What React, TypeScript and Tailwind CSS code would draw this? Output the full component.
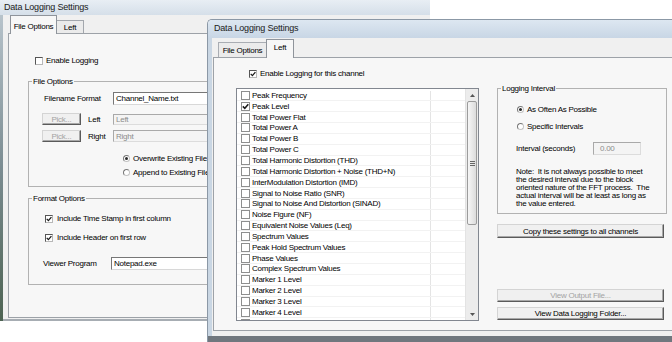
import type { ReactNode } from "react";

const channels = [
  "Peak Frequency",
  "Peak Level",
  "Total Power Flat",
  "Total Power A",
  "Total Power B",
  "Total Power C",
  "Total Harmonic Distortion (THD)",
  "Total Harmonic Distortion + Noise (THD+N)",
  "InterModulation Distortion (IMD)",
  "Signal to Noise Ratio (SNR)",
  "Signal to Noise And Distortion (SINAD)",
  "Noise Figure (NF)",
  "Equivalent Noise Values (Leq)",
  "Spectrum Values",
  "Peak Hold Spectrum Values",
  "Phase Values",
  "Complex Spectrum Values",
  "Marker 1 Level",
  "Marker 2 Level",
  "Marker 3 Level",
  "Marker 4 Level",
  "Marker 5 Level",
];

const note = [
  "Note:  It is not always possible to meet",
  "the desired interval due to the block",
  "oriented nature of the FFT process.  The",
  "actual interval will be at least as long as",
  "the value entered.",
];

function Tick({ size = 6 }: { size?: number }) {
  return (
    <svg width={size} height={size} viewBox="0 0 6 6" className="block">
      <path d="M0.7 2.9 2.4 4.6 5.4 1.1" fill="none" stroke="#1a1a1a" strokeWidth="1.3" />
    </svg>
  );
}

// classic sunken checkbox
function CheckBox({ checked = false }: { checked?: boolean }) {
  return (
    <span className="flex h-[8px] w-[8px] shrink-0 items-center justify-center border border-[#555] border-r-[#b8b8b8] border-b-[#b8b8b8] bg-white">
      {checked && <Tick />}
    </span>
  );
}

function ListBox({ checked = false }: { checked?: boolean }) {
  return (
    <span className="flex h-[9px] w-[9px] shrink-0 items-center justify-center border border-[#8e8f8f] bg-white">
      {checked && <Tick size={7} />}
    </span>
  );
}

function Radio({ on = false }: { on?: boolean }) {
  return (
    <span className="flex h-[7px] w-[7px] shrink-0 items-center justify-center rounded-full border border-[#777] border-r-[#c4c4c4] border-b-[#c4c4c4] bg-white">
      {on && <span className="h-[3px] w-[3px] rounded-full bg-[#2a2a2a]" />}
    </span>
  );
}

function Btn({ children, disabled = false, className = "" }: { children: ReactNode; disabled?: boolean; className?: string }) {
  return (
    <div
      className={`flex shrink-0 items-center justify-center border border-[#d4d4d4] border-r-[#5a5a5a] border-b-[#5a5a5a] bg-[#f0f0f0] shadow-[inset_-1px_-1px_0_#a8a8a8] ${
        disabled ? "text-[#a3a3a3]" : "text-black"
      } ${className}`}
    >
      {children}
    </div>
  );
}

function Field({ children, disabled = false, className = "" }: { children: ReactNode; disabled?: boolean; className?: string }) {
  return (
    <div
      className={`flex items-center border pl-[2px] ${
        disabled
          ? "border-[#a9a9a9] border-r-[#dcdcdc] border-b-[#dcdcdc] bg-[#f4f4f4] text-[#8c8c8c]"
          : "border-[#777] border-r-[#d8d8d8] border-b-[#d8d8d8] bg-white"
      } ${className}`}
    >
      {children}
    </div>
  );
}

function Group({ title, className = "", children }: { title: string; className?: string; children: ReactNode }) {
  return (
    <fieldset className={`border border-[#b2b2b2] ${className}`}>
      <legend className="ml-[3px] px-[1px] leading-[11px]">{title}</legend>
      {children}
    </fieldset>
  );
}

function BackWindow() {
  return (
    <div className="absolute left-0 top-0 flex h-[321px] w-[430px] flex-col">
      <div className="h-[15px] shrink-0 bg-linear-to-b from-[#e8eef4] to-[#d5dfe9] pl-[4px] text-[9px] leading-[15px] tracking-[-0.2px] text-[#1b1b1b]">
        Data Logging Settings
      </div>
      <div className="flex min-h-0 flex-1">
        <div className="w-[3px] shrink-0 bg-linear-to-b from-[#b7c3cb] via-[#7b8c92] to-[#4d6352]" />
        <div className="flex flex-1 flex-col border-b-2 border-[#a7adb3] bg-[#f0f0f0] pb-[1px] pl-[5px]">
          <div className="flex h-[18px] shrink-0 items-end pl-[2px]">
            <div className="relative z-10 -mb-px flex h-[19px] w-[47px] items-center justify-center border border-b-0 border-[#8f949b] bg-[#f7f7f7] pt-[2px]">
              File Options
            </div>
            <div className="flex h-[13px] w-[27px] items-center justify-center border border-b-0 border-l-0 border-[#a3a7ad] bg-[#ebebeb]">
              Left
            </div>
          </div>
          <div className="flex min-h-0 flex-1 flex-col border border-[#9da2a8] bg-[#f7f7f7]">
            <div className="ml-[26px] mt-[21px] flex h-[11px] items-center gap-[3px]">
              <CheckBox />
              <span>Enable Logging</span>
            </div>

            <Group title="File Options" className="ml-[19px] mt-[10px] h-[111px] w-[390px] shrink-0">
              <div className="mt-[5px] flex h-[13px] items-center pl-[15px] pr-[8px]">
                <span className="w-[69px] shrink-0">Filename Format</span>
                <Field className="h-[13px] flex-1">Channel_Name.txt</Field>
              </div>
              <div className="mt-[8px] flex h-[12px] items-center pl-[13px] pr-[8px]">
                <Btn disabled className="h-[12px] w-[39px]">Pick...</Btn>
                <span className="ml-[7px] w-[25px] shrink-0">Left</span>
                <Field disabled className="h-[11px] flex-1">Left</Field>
              </div>
              <div className="mt-[5px] flex h-[12px] items-center pl-[13px] pr-[8px]">
                <Btn disabled className="h-[12px] w-[39px]">Pick...</Btn>
                <span className="ml-[7px] w-[25px] shrink-0">Right</span>
                <Field disabled className="h-[12px] flex-1">Right</Field>
              </div>
              <div className="mt-[11px] flex h-[11px] items-center gap-[3px] pl-[94px]">
                <Radio on />
                <span>Overwrite Existing File</span>
              </div>
              <div className="mt-[3px] flex h-[11px] items-center gap-[3px] pl-[94px]">
                <Radio />
                <span>Append to Existing File</span>
              </div>
            </Group>

            <Group title="Format Options" className="ml-[19px] mt-[6px] h-[92px] w-[390px] shrink-0">
              <div className="mt-[9px] flex h-[11px] items-center gap-[4px] pl-[16px]">
                <CheckBox checked />
                <span>Include Time Stamp in first column</span>
              </div>
              <div className="mt-[8px] flex h-[11px] items-center gap-[4px] pl-[16px]">
                <CheckBox checked />
                <span>Include Header on first row</span>
              </div>
              <div className="mt-[14px] flex h-[13px] items-center pl-[14px] pr-[8px]">
                <span className="w-[68px] shrink-0">Viewer Program</span>
                <Field className="h-[13px] flex-1">Notepad.exe</Field>
              </div>
            </Group>
          </div>
        </div>
      </div>
    </div>
  );
}

function ScrollBar() {
  return (
    <div className="flex w-[13px] shrink-0 flex-col border-l border-[#e3e3e3] bg-[#ececec]">
      <div className="flex h-[12px] shrink-0 items-center justify-center">
        <svg width="5" height="3" viewBox="0 0 5 3"><path d="M0 3 2.5 0 5 3z" fill="#555" /></svg>
      </div>
      <div className="mx-[1px] flex h-[124px] shrink-0 items-center justify-center rounded-[2px] border border-[#9c9c9c] bg-linear-to-r from-[#f6f6f6] to-[#dcdcdc]">
        <svg width="5" height="5" viewBox="0 0 5 5">
          <path d="M0 0.5h5M0 2.5h5M0 4.5h5" stroke="#666" strokeWidth="1" />
        </svg>
      </div>
      <div className="flex-1" />
      <div className="flex h-[12px] shrink-0 items-center justify-center">
        <svg width="5" height="3" viewBox="0 0 5 3"><path d="M0 0 2.5 3 5 0z" fill="#555" /></svg>
      </div>
    </div>
  );
}

function FrontWindow() {
  return (
    <div className="absolute left-[207px] top-[19px] flex h-[323px] w-[470px] flex-col overflow-hidden rounded-tl-[5px] border-l border-t border-[#8b98a6]">
      <div className="h-[18px] shrink-0 bg-linear-to-b from-[#dde7f1] to-[#c8d6e5] pl-[6px] text-[9px] leading-[17px] tracking-[-0.2px] text-[#1b1b1b]">
        Data Logging Settings
      </div>
      <div className="flex min-h-0 flex-1">
        <div className="w-[4px] shrink-0 bg-[#c9d6e3]" />
        <div className="flex flex-1 flex-col bg-[#f0f0f0]">
          <div className="flex h-[19px] shrink-0 items-end pl-[6px]">
            <div className="flex h-[15px] w-[48px] items-center justify-center border border-b-0 border-r-0 border-[#a9adb3] bg-[#ebebeb]">
              File Options
            </div>
            <div className="relative z-10 -mb-px flex h-[19px] w-[28px] items-center justify-center border border-b-0 border-[#8f949b] bg-[#f7f7f7] pb-[3px]">
              Left
            </div>
          </div>
          <div className="ml-[1px] flex h-[274px] shrink-0 border border-[#9da2a8] bg-[#f7f7f7]">
            <div className="ml-[22px] flex w-[243px] shrink-0 flex-col">
              <div className="mt-[10px] flex h-[11px] items-center gap-[3px] pl-[13px]">
                <CheckBox checked />
                <span>Enable Logging for this channel</span>
              </div>
              <div className="mt-[9px] flex h-[233px] border border-[#828790] bg-white">
                <div className="min-w-0 flex-1 overflow-hidden pt-[1.5px]">
                  {channels.map((name, i) => (
                    <div key={name} className="flex h-[10.85px] border-b border-[#f2f2f2]">
                      <div className="flex w-[194px] shrink-0 items-center gap-[2px] border-r border-[#e4e4e4] pl-[4px] whitespace-nowrap">
                        <ListBox checked={i === 1} />
                        <span>{name}</span>
                      </div>
                      <div className="flex-1" />
                    </div>
                  ))}
                </div>
                <ScrollBar />
              </div>
            </div>

            <div className="ml-[18px] flex w-[170px] shrink-0 flex-col">
              <Group title="Logging Interval" className="mt-[25px] h-[131px] shrink-0">
                <div className="mt-[10px] flex h-[11px] items-center gap-[3px] pl-[19px]">
                  <Radio on />
                  <span>As Often As Possible</span>
                </div>
                <div className="mt-[6px] flex h-[11px] items-center gap-[3px] pl-[19px]">
                  <Radio />
                  <span>Specific Intervals</span>
                </div>
                <div className="mt-[10px] flex h-[13px] items-center pl-[18px]">
                  <span className="w-[77px] shrink-0">Interval (seconds)</span>
                  <Field disabled className="h-[13px] w-[48px] pl-[6px]">0.00</Field>
                </div>
                <div className="mt-[13px] pl-[18px] leading-[8px]">
                  {note.map((line) => (
                    <div key={line} className="whitespace-pre">{line}</div>
                  ))}
                </div>
              </Group>
              <Btn className="mt-[10px] h-[14px] w-[167px]">Copy these settings to all channels</Btn>
              <Btn disabled className="mt-[51px] h-[13px] w-[167px]">View Output File...</Btn>
              <Btn className="mt-[5px] h-[13px] w-[167px]">View Data Logging Folder...</Btn>
            </div>
          </div>
        </div>
      </div>
      <div className="h-[6px] shrink-0 bg-[#70777e]" />
    </div>
  );
}

export default function App() {
  return (
    <div className="relative h-[342px] w-[672px] overflow-hidden bg-white font-['Liberation_Sans',Arial,sans-serif] text-[8px] leading-[11px] tracking-[-0.25px] text-black">
      <BackWindow />
      <FrontWindow />
    </div>
  );
}
